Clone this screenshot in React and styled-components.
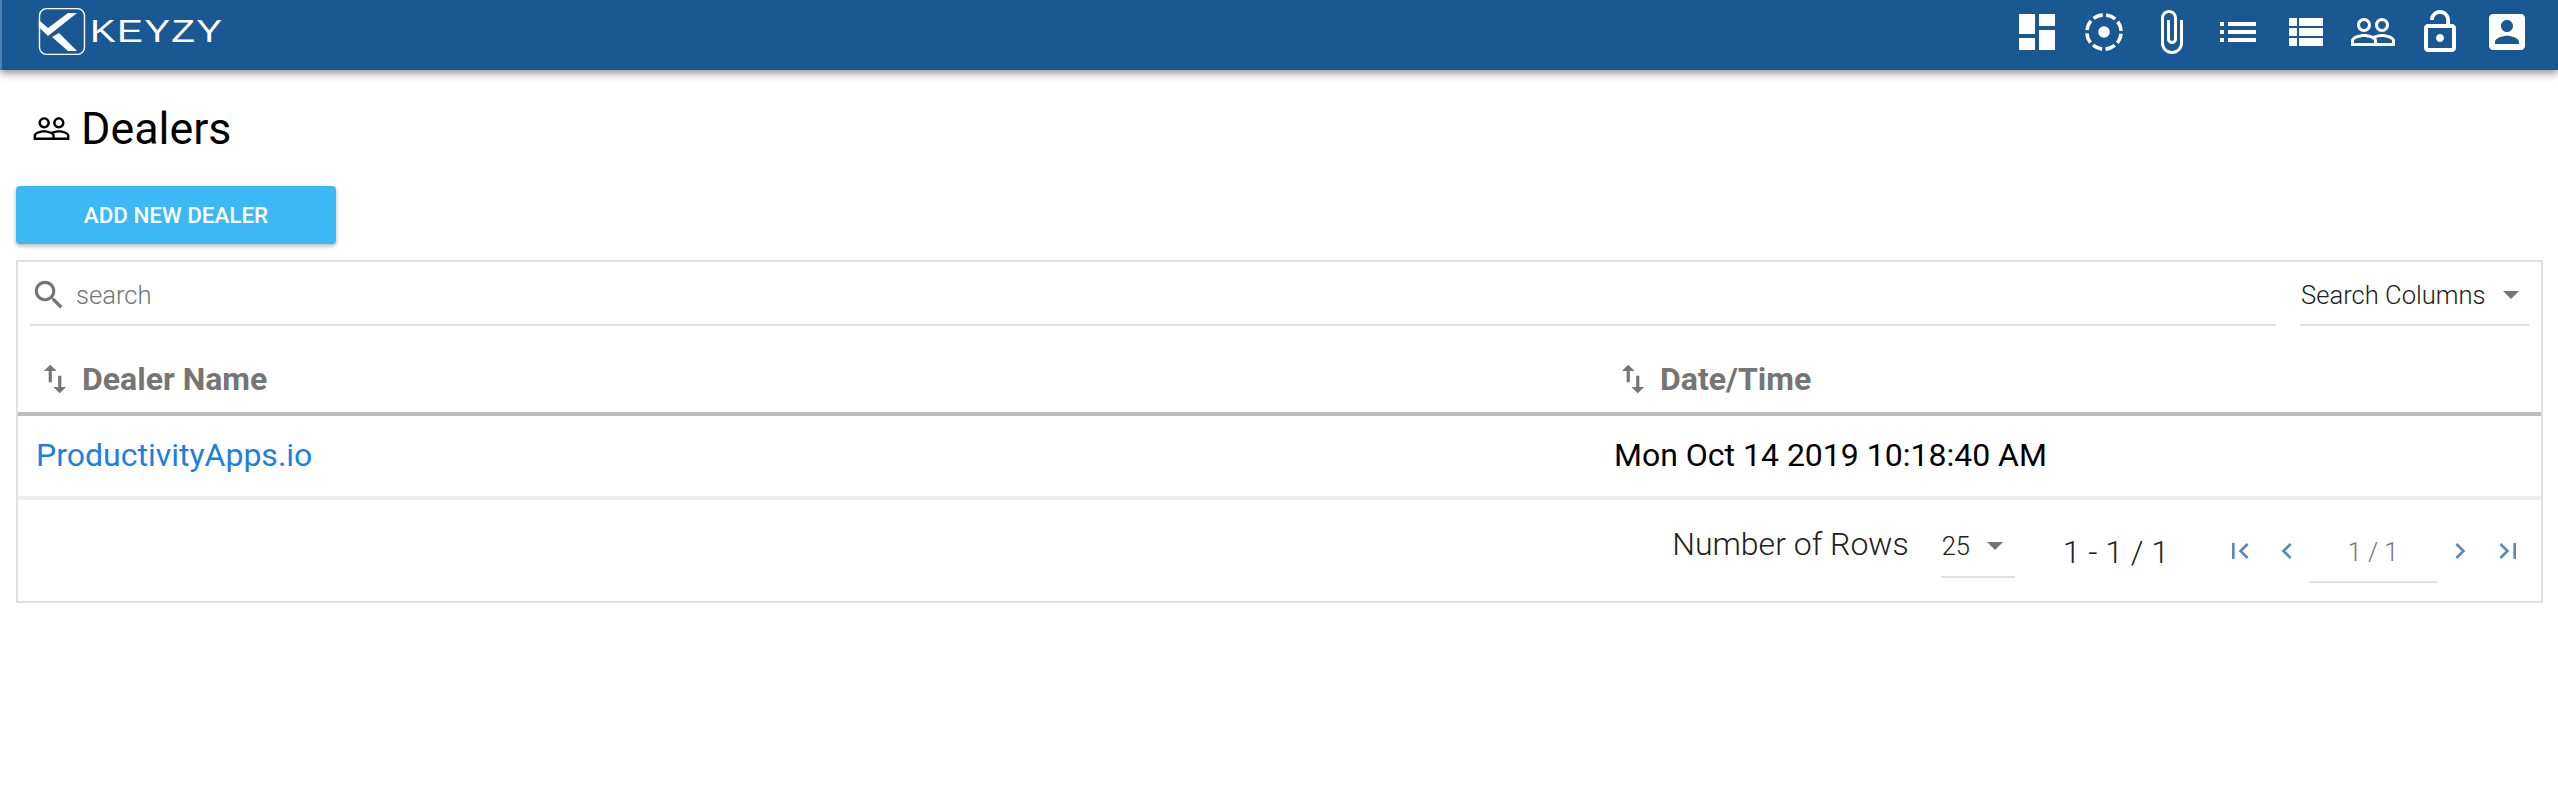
import React from 'react';
import styled, { createGlobalStyle } from 'styled-components';

const paths = {
  dashboard: 'M3 13h8V3H3v10zm0 8h8v-6H3v6zm10 0h8V11h-8v10zm0-18v6h8V3h-8z',
  attach: 'M16.5 6v11.5c0 2.21-1.79 4-4 4s-4-1.79-4-4V5c0-1.38 1.12-2.5 2.5-2.5s2.5 1.12 2.5 2.5v10.5c0 .55-.45 1-1 1s-1-.45-1-1V6H10v9.5c0 1.38 1.12 2.5 2.5 2.5s2.5-1.12 2.5-2.5V5c0-2.21-1.79-4-4-4S7 2.79 7 5v12.5c0 3.04 2.46 5.5 5.5 5.5s5.5-2.46 5.5-5.5V6h-1.5z',
  list: 'M3 13h2v-2H3v2zm0 4h2v-2H3v2zm0-8h2V7H3v2zm4 4h14v-2H7v2zm0 4h14v-2H7v2zM7 7v2h14V7H7z',
  viewList: 'M4 14h4v-4H4v4zm0 5h4v-4H4v4zM4 9h4V5H4v4zm5 5h12v-4H9v4zm0 5h12v-4H9v4zM9 5v4h12V5H9z',
  people: 'M16.5 13c-1.2 0-3.07.34-4.5 1-1.43-.67-3.3-1-4.5-1C5.33 13 1 14.08 1 16.25V19h22v-2.75c0-2.17-4.33-3.25-6.5-3.25zm-4 4.5h-10v-1.25c0-.54 2.56-1.75 5-1.75s5 1.21 5 1.75v1.25zm9 0H14v-1.25c0-.46-.2-.86-.52-1.22.88-.3 1.96-.53 3.02-.53 2.44 0 5 1.21 5 1.75v1.25zM7.5 12c1.93 0 3.5-1.57 3.5-3.5S9.43 5 7.5 5 4 6.57 4 8.5 5.57 12 7.5 12zm0-5.5c1.1 0 2 .9 2 2s-.9 2-2 2-2-.9-2-2 .9-2 2-2zm9 5.5c1.93 0 3.5-1.57 3.5-3.5S18.43 5 16.5 5 13 6.57 13 8.5s1.57 3.5 3.5 3.5zm0-5.5c1.1 0 2 .9 2 2s-.9 2-2 2-2-.9-2-2 .9-2 2-2z',
  lockOpen: 'M12 17c1.1 0 2-.9 2-2s-.9-2-2-2-2 .9-2 2 .9 2 2 2zm6-9h-1V6c0-2.76-2.24-5-5-5S7 3.24 7 6h1.9c0-1.71 1.39-3.1 3.1-3.1 1.71 0 3.1 1.39 3.1 3.1v2H6c-1.1 0-2 .9-2 2v10c0 1.1.9 2 2 2h12c1.1 0 2-.9 2-2V10c0-1.1-.9-2-2-2zm0 12H6V10h12v10z',
  account: 'M3 5v14c0 1.1.89 2 2 2h14c1.1 0 2-.9 2-2V5c0-1.1-.9-2-2-2H5c-1.11 0-2 .9-2 2zm12 4c0 1.66-1.34 3-3 3s-3-1.34-3-3 1.34-3 3-3 3 1.34 3 3zm-9 8c0-2 4-3.1 6-3.1s6 1.1 6 3.1v1H6v-1z',
  search: 'M15.5 14h-.79l-.28-.27C15.41 12.59 16 11.11 16 9.5 16 5.91 13.09 3 9.5 3S3 5.91 3 9.5 5.91 16 9.5 16c1.61 0 3.09-.59 4.23-1.57l.27.28v.79l5 4.99L20.49 19l-4.99-5zm-6 0C7.01 14 5 11.99 5 9.5S7.01 5 9.5 5 14 7.01 14 9.5 11.99 14 9.5 14z',
  sort: 'M9 3L5 6.99h3V14h2V6.99h3L9 3zm7 14.01V10h-2v7.01h-3L15 21l4-3.99h-3z',
  first: 'M18.41 16.59L13.82 12l4.59-4.59L17 6l-6 6 6 6zM6 6h2v12H6z',
  prev: 'M15.41 7.41L14 6l-6 6 6 6 1.41-1.41L10.83 12z',
  next: 'M10 6L8.59 7.41 13.17 12l-4.58 4.59L10 18l6-6z',
  last: 'M5.59 7.41L10.18 12l-4.59 4.59L7 18l6-6-6-6zM16 6h2v12h-2z',
};

const GlobalStyle = createGlobalStyle`
  html, body {
    margin: 0;
    padding: 0;
    background: #fff;
    font-family: Roboto, "Liberation Sans", sans-serif;
  }
`;

const Svg = styled.svg`
  display: block;
  flex: none;
  width: ${(p) => p.$size || 48}px;
  height: ${(p) => p.$size || 48}px;
  fill: ${(p) => p.$color || '#fff'};
`;

const Icon = ({ name, size, color }) => (
  <Svg viewBox="0 0 24 24" $size={size} $color={color}>
    <path d={paths[name]} />
  </Svg>
);

const TargetIcon = () => (
  <Svg viewBox="0 0 24 24">
    <circle cx="12" cy="12" r="2.9" />
    <circle cx="12" cy="12" r="8.6" fill="none" stroke="#fff" strokeWidth="1.8" strokeDasharray="4.95 1.8" strokeDashoffset="-0.9" />
  </Svg>
);

const LogoMark = () => (
  <LogoSvg viewBox="0 0 48 49">
    <rect x="1.5" y="1.6" width="45" height="45.8" rx="7" fill="none" stroke="#fff" strokeWidth="1.4" />
    <path d="M0.8 13L10 21L30 6H39L10 29L0.8 20Z" fill="#fff" />
    <path d="M14 30L21 26L39 44H30Z" fill="#fff" />
  </LogoSvg>
);

const Header = styled.header`
  height: 70px;
  display: flex;
  align-items: center;
  justify-content: space-between;
  padding: 0 27px 0 36px;
  background: #1a5894;
  border-left: 2px solid #4f7fae;
  box-shadow: 0 3px 8px rgba(0, 0, 0, 0.45);
`;

const Brand = styled.div`
  display: flex;
  align-items: center;
  gap: 4px;
  margin-top: -7px;
`;

const LogoSvg = styled.svg`
  display: block;
  width: 48px;
  height: 49px;
`;

const BrandName = styled.span`
  font-family: "Liberation Sans", sans-serif;
  font-size: 31px;
  line-height: 31px;
  letter-spacing: 1px;
  color: #fff;
  transform: scaleX(1.25);
  transform-origin: left center;
`;

const Nav = styled.nav`
  display: flex;
  gap: 19.2px;
  margin-top: -6px;
`;

const Page = styled.main`
  padding: 0 15px 0 16px;
`;

const TitleRow = styled.div`
  height: 116px;
  display: flex;
  align-items: center;
  padding-left: 16px;
  gap: 10px;
`;

const Title = styled.h1`
  margin: 0;
  font-size: 44.8px;
  font-weight: 400;
  color: #000;
`;

const AddButton = styled.button`
  display: block;
  width: 320px;
  height: 58px;
  border: 0;
  border-radius: 4px;
  background: #3db8f5;
  color: #fff;
  font-family: inherit;
  font-size: 22.4px;
  font-weight: 500;
  box-shadow: 0 2px 4px rgba(0, 0, 0, 0.3);
`;

const TableBox = styled.section`
  margin-top: 16px;
  border: 2px solid #e0e0e0;
`;

const SearchBar = styled.div`
  display: flex;
  justify-content: space-between;
  gap: 24px;
  padding: 0 12px;
  height: 64px;
`;

const SearchField = styled.div`
  flex: 1;
  display: flex;
  align-items: center;
  padding-top: 3px;
  border-bottom: 2px solid #e0e0e0;
`;

const SearchText = styled.span`
  margin-left: 8px;
  font-size: 25.6px;
  font-weight: 300;
  color: #757575;
`;

const ColumnSelect = styled.div`
  width: 229px;
  display: flex;
  align-items: center;
  justify-content: space-between;
  padding: 3px 10px 0 1px;
  box-sizing: border-box;
  border-bottom: 2px solid #e0e0e0;
  font-size: 25.6px;
  font-weight: 300;
  color: #212121;
`;

const Caret = styled.span`
  width: 0;
  height: 0;
  border-left: 8px solid transparent;
  border-right: 8px solid transparent;
  border-top: 8px solid #757575;
`;

const Grid = styled.div`
  display: grid;
  grid-template-columns: 1578px 1fr;
  align-items: center;
  height: ${(p) => p.$height}px;
  border-bottom: 4px solid ${(p) => p.$line};
`;

const HeadCell = styled.div`
  display: flex;
  align-items: center;
  gap: 8px;
  padding: 20px 0 0 ${(p) => p.$pad}px;
  font-size: 32px;
  font-weight: 700;
  color: #757575;
`;

const Cell = styled.div`
  padding: 0 0 2px 18px;
  font-size: 32px;
  color: #000;
`;

const DealerLink = styled.a`
  color: #1e7fe0;
  text-decoration: none;
`;

const Pager = styled.div`
  height: 101px;
  display: flex;
  align-items: center;
  justify-content: flex-end;
  padding-right: 17px;
`;

const RowsLabel = styled.span`
  font-size: 32px;
  font-weight: 300;
  color: #212121;
  margin-bottom: 14px;
`;

const RowsSelect = styled.div`
  width: 74px;
  height: 54px;
  margin-left: 32px;
  padding: 0 12px 8px 1px;
  box-sizing: border-box;
  display: flex;
  align-items: center;
  justify-content: space-between;
  border-bottom: 2px solid #e0e0e0;
  font-size: 25.6px;
  font-weight: 300;
  color: #212121;
`;

const RangeText = styled.span`
  margin: 3px 55px 0 48px;
  font-size: 32px;
  font-weight: 300;
  color: #212121;
`;

const PageField = styled.div`
  width: 128px;
  height: 64px;
  margin: 0 7px 0 6px;
  padding-top: 4px;
  box-sizing: border-box;
  display: flex;
  align-items: center;
  justify-content: center;
  border-bottom: 2px solid #e0e0e0;
  font-size: 25.6px;
  font-weight: 300;
  color: #757575;
`;

const PagerButton = styled.span`
  display: block;
  margin-left: ${(p) => p.$left || 0}px;
`;

const App = () => (
  <>
    <GlobalStyle />
    <Header>
      <Brand>
        <LogoMark />
        <BrandName>KEYZY</BrandName>
      </Brand>
      <Nav>
        <Icon name="dashboard" />
        <TargetIcon />
        <Icon name="attach" />
        <Icon name="list" />
        <Icon name="viewList" />
        <Icon name="people" />
        <Icon name="lockOpen" />
        <Icon name="account" />
      </Nav>
    </Header>
    <Page>
      <TitleRow>
        <Icon name="people" size={39} color="#000" />
        <Title>Dealers</Title>
      </TitleRow>
      <AddButton>ADD NEW DEALER</AddButton>
      <TableBox>
        <SearchBar>
          <SearchField>
            <Icon name="search" size={38} color="#757575" />
            <SearchText>search</SearchText>
          </SearchField>
          <ColumnSelect>
            Search Columns
            <Caret />
          </ColumnSelect>
        </SearchBar>
        <Grid $height={86} $line="#bdbdbd">
          <HeadCell $pad={18}>
            <Icon name="sort" size={38} color="#757575" />
            Dealer Name
          </HeadCell>
          <HeadCell $pad={18}>
            <Icon name="sort" size={38} color="#757575" />
            Date/Time
          </HeadCell>
        </Grid>
        <Grid $height={80} $line="#eeeeee">
          <Cell><DealerLink>ProductivityApps.io</DealerLink></Cell>
          <Cell>Mon Oct 14 2019 10:18:40 AM</Cell>
        </Grid>
        <Pager>
          <RowsLabel>Number of Rows</RowsLabel>
          <RowsSelect>
            25
            <Caret />
          </RowsSelect>
          <RangeText>1 - 1 / 1</RangeText>
          <PagerButton><Icon name="first" size={32} color="#5a8abb" /></PagerButton>
          <PagerButton $left={15}><Icon name="prev" size={32} color="#5a8abb" /></PagerButton>
          <PageField>1 / 1</PageField>
          <PagerButton><Icon name="next" size={32} color="#5a8abb" /></PagerButton>
          <PagerButton $left={16}><Icon name="last" size={32} color="#5a8abb" /></PagerButton>
        </Pager>
      </TableBox>
    </Page>
  </>
);

export default App;
